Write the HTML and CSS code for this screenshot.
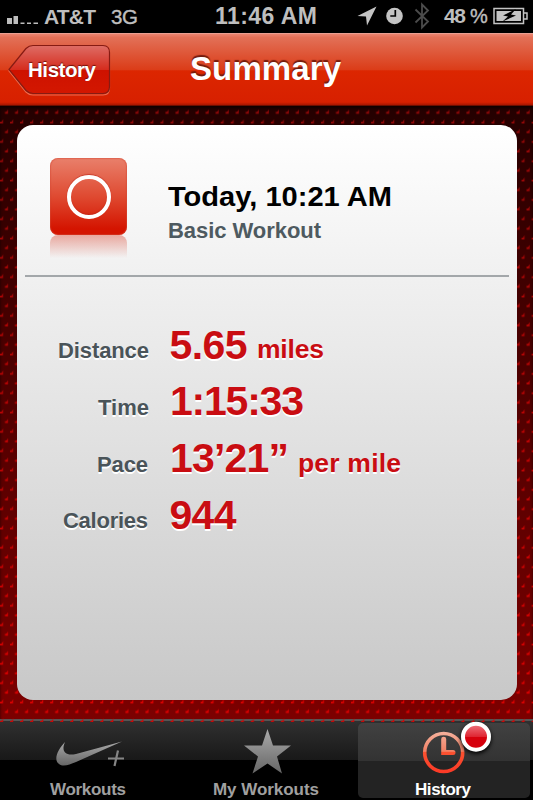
FILE: index.html
```html
<!DOCTYPE html>
<html lang="en">
<head>
<meta charset="utf-8">
<title>Summary</title>
<link rel="stylesheet" href="styles.css">
</head>
<body>
<div class="app">
  <header class="status">
    <div class="status-left">
      <svg width="32" height="8" viewBox="0 0 32 8" fill="#bdbdbd"><path d="M0 2h5v6H0zM6.500 0h4.500v8H6.500zM13.500 6.500h4v1.500h-4zM20 6.500h4v1.500H20zM26.500 6.500h4.500v1.500h-4.500z"/></svg>
      <svg class="st" width="110" height="32"><text x="0" y="24" textLength="52" class="b">AT&amp;T</text><text x="67" y="24" textLength="27" class="r">3G</text></svg>
    </div>
    <svg class="st clock" width="110" height="32"><text x="1" y="24" textLength="102" class="b time">11:46 AM</text></svg>
    <svg class="status-icons" width="173" height="32" viewBox="360 0 173 32">
      <path d="M376.500 6.500 367 25.500 366 16.500 357.500 16z" fill="#c4c4c4"/>
      <circle cx="394.500" cy="16" r="8.300" fill="#c4c4c4"/><path d="M395.300 10v6h-5" fill="none" stroke="#000" stroke-width="1.700"/>
      <path d="M415.500 9.500 428 21.500 422 27.500V4.500l6 6L415.500 22.500" fill="none" stroke="#4c4c4c" stroke-width="1.800"/>
      <text x="444" y="23" textLength="22" class="b">48</text><text x="470" y="23" textLength="18" class="r2">%</text>
      <rect x="494" y="8.500" width="29.500" height="15" fill="none" stroke="#c4c4c4" stroke-width="1.500"/>
      <rect x="496.500" y="11" width="24.500" height="10" fill="#c4c4c4"/><path d="M524 13h3v6h-3" fill="none" stroke="#c4c4c4" stroke-width="1.500"/>
      <path d="m516 9-13 6.500 5 1-5.500 5 13.500-6-5-1z" fill="#000"/>
    </svg>
  </header>
  <nav class="bar">
    <a class="back">
      <svg width="104" height="52" viewBox="0 0 104 52">
        <defs><linearGradient id="bk" x2="0" y2="1"><stop offset="0" stop-color="#de6d66"/><stop offset=".5" stop-color="#d52d1e"/><stop offset=".52" stop-color="#ce1200"/><stop offset="1" stop-color="#d31700"/></linearGradient></defs>
        <path d="M1 27 18 6q3-3 7-3h70q6.500 0 6.500 7v34q0 7-6.500 7H25q-4 0-7-3z" fill="none" stroke="#e96c50" stroke-width="1.200"/>
        <path d="M1 25.500 18 4.500q3-3 7-3h70q6.500 0 6.500 7v34q0 7-6.500 7H25q-4 0-7-3z" fill="url(#bk)" stroke="#871b12" stroke-width="1.200"/>
        <text x="20" y="32.500" textLength="68" class="back-text">History</text>
      </svg>
    </a>
    <h1 class="title"><svg width="160" height="60"><text x="3" y="46" textLength="151">Summary</text></svg></h1>
  </nav>
  <main class="stage">
    <svg class="weave" width="533" height="616">
      <defs>
        <pattern id="wp" width="10.030" height="19.330" patternUnits="userSpaceOnUse" patternTransform="translate(0 2.500)"><path fill="#fff" d="M8 1v4.200H5V3.500h1.500zM3 10.700v4.200H0v-1.700h1.500z"/></pattern>
        <linearGradient id="tc" x2="0" y2="1"><stop offset="0" stop-color="#8f0808"/><stop offset=".3" stop-color="#ac0505"/><stop offset="1" stop-color="#de0000"/></linearGradient>
        <mask id="mk"><rect width="533" height="616" fill="url(#wp)"/></mask>
      </defs>
      <rect width="533" height="616" fill="url(#tc)" mask="url(#mk)"/>
    </svg>
    <section class="card">
      <div class="intro">
        <div class="badge-wrap"><div class="badge"><i></i></div><div class="mirror"></div></div>
        <svg class="heading" width="250" height="70"><text x="0" y="24" textLength="224" lengthAdjust="spacingAndGlyphs" class="when">Today, 10:21 AM</text><text x="0" y="56" textLength="153" class="kind">Basic Workout</text></svg>
      </div>
      <svg class="stats" width="483" height="240" viewBox="25 310 483 240">
        <g class="label"><text x="58" y="358" textLength="91">Distance</text><text x="98" y="415" textLength="51">Time</text><text x="97" y="471.500" textLength="51">Pace</text><text x="63" y="528" textLength="85">Calories</text></g>
        <g class="value"><text x="169.500" y="358.500" textLength="78">5.65</text><text x="170" y="415" textLength="134">1:15:33</text><text x="170" y="472" textLength="119">13’21”</text><text x="169.500" y="528.500" textLength="67">944</text></g>
        <g class="unit"><text x="257" y="358" textLength="67">miles</text><text x="298" y="472" textLength="103">per mile</text></g>
      </svg>
    </section>
  </main>
  <footer class="tabs">
    <div class="tab"><svg width="178" height="80" viewBox="0 720 178 80">
      <defs><linearGradient id="gr" x2="0" y2="1"><stop offset="0" stop-color="#aaa"/><stop offset="1" stop-color="#666"/></linearGradient></defs>
      <path d="M65 741C58 748 53 759 59 763c4 3 10 1 17-2l46-20.500-46 12.500c-11 2.500-15-3-11-12z" fill="url(#gr)"/>
      <path d="M118 749.500l-3.500 15.500M108 757.500h16" stroke="#858585" stroke-width="2.200"/>
      <text x="50" y="794" textLength="76">Workouts</text></svg></div>
    <div class="tab"><svg width="178" height="80" viewBox="178 720 178 80">
      <path d="m267.500 728 5.500 16.500h18l-14 11 5 17-14.500-10-15 10 5.500-17-14-11h18z" fill="url(#gr)"/>
      <text x="213" y="794" textLength="106">My Workouts</text></svg></div>
    <div class="tab on"><svg width="172" height="75" viewBox="358 723 172 75">
      <defs><linearGradient id="or" gradientUnits="userSpaceOnUse" x1="0" y1="732" x2="0" y2="773"><stop offset="0" stop-color="#f4b19c"/><stop offset=".47" stop-color="#f28064"/><stop offset=".5" stop-color="#fb5130"/><stop offset="1" stop-color="#fb3926"/></linearGradient>
      <linearGradient id="dot" x2="0" y2="1"><stop offset="0" stop-color="#f07882"/><stop offset=".5" stop-color="#df2532"/><stop offset=".53" stop-color="#d6000c"/><stop offset="1" stop-color="#d6000c"/></linearGradient></defs>
      <circle cx="443.700" cy="752.500" r="19" fill="none" stroke="url(#or)" stroke-width="3.600"/>
      <path d="M441.200 739q0-2.300 2.500-2.300t2.500 2.300V750h6.800q2.500 0 2.500 2.500t-2.500 2.500h-11.800z" fill="url(#or)"/>
      <circle class="alert" cx="476" cy="736.700" r="13" fill="url(#dot)" stroke="#fff" stroke-width="4"/>
      <text x="415" y="795" textLength="56">History</text></svg></div>
  </footer>
</div>
</body>
</html>
```

FILE: styles.css
```css
* { box-sizing: border-box; }
body { margin: 0; background: #000; font-family: "Liberation Sans", Arial, sans-serif; font-weight: 700; }
svg { display: block; }
.app { width: 533px; height: 800px; display: flex; flex-direction: column; overflow: hidden; }
.status { height: 33px; flex: none; display: grid; grid-template-columns: 214px 146px 173px; background: #000; }
.status-left { display: flex; align-items: flex-start; padding-left: 7px; gap: 5px; }
.status-left > svg:first-child { margin-top: 16px; }
.status text { font-size: 21px; fill: #bebebe; }
.status .r { font-weight: 400; font-size: 20.500px; stroke: #bebebe; stroke-width: .4px; }
.status .r2 { font-size: 20px; font-weight: 400; stroke: #bebebe; stroke-width: .4px; }
.status .time { font-size: 23px; }
.status-icons { overflow: visible; }
.bar { height: 73px; flex: none; display: grid; grid-template-columns: 187px 160px 1fr; background: linear-gradient(#eb8470, #e27057 5%, #db3d19 50%, #dc2600 52%, #d72000 96%, #a81600); border-top: 1px solid #e99f91; border-bottom: 1px solid #6c0e00; }
.back { padding: 10px 0 0 8px; }
.back-text { font-size: 20.500px; fill: #fff; text-shadow: 0 -1px 1px #701008; }
.title { margin: 0; font-size: 33px; }
.title text { fill: #fff; text-shadow: 0 -2px 1px #741c0d; }
.stage { flex: 1; position: relative; padding: 19px 17px; background: linear-gradient(#240000, #460000 35%, #7c0000); box-shadow: inset 0 2px 3px #0009; }
.weave { position: absolute; inset: 0; }
.card { position: relative; width: 499.500px; height: 575px; padding: 0 8px; border-radius: 16px; background: linear-gradient(#fff, #c8c8c8); }
.intro { display: flex; height: 152px; padding: 33px 0 0 25px; border-bottom: 2px solid #a3a7aa; }
.badge-wrap { width: 118px; }
.badge { width: 77px; height: 77px; display: grid; place-items: center; border-radius: 8px; background: linear-gradient(#e9806b, #df4a31 50%, #d41400 92%, #d41400); box-shadow: inset 0 0 1px 1px #d6493680; }
.badge i { width: 44px; height: 44px; border: 4px solid #fff; border-radius: 50%; box-shadow: 0 -1px 1px #b5221699, inset 0 -1px 1px #b5221699; }
.mirror { width: 77px; height: 23px; border-radius: 8px 8px 0 0; background: linear-gradient(#d4281060, #d4281000); }
.heading { margin-top: 24px; }
.when { font-size: 27.500px; }
.kind { font-size: 22px; fill: #4e5a60; }
.stats { margin-top: 33px; }
.stats text { text-shadow: 0 2px 0 #fff; }
.label { font-size: 22px; fill: #4a5459; }
.value { font-size: 41px; fill: #c90d12; }
.unit { font-size: 26.500px; fill: #c90d12; }
.tabs { height: 81px; flex: none; display: grid; grid-template-columns: 178px 180px 172px; background: linear-gradient(#303030, #181818 50%, #000 50%); border-top: 2px solid #555; }
.tab text { font-size: 17px; fill: #a0a0a0; }
.tab.on { height: 75px; margin-top: 2px; border-radius: 5px; background: linear-gradient(#414141, #333 50%, #232323 50%); }
.tab.on svg { overflow: visible; }
.tab.on text { fill: #fff; }
.alert { filter: drop-shadow(0 2px 2px #000); }
```
